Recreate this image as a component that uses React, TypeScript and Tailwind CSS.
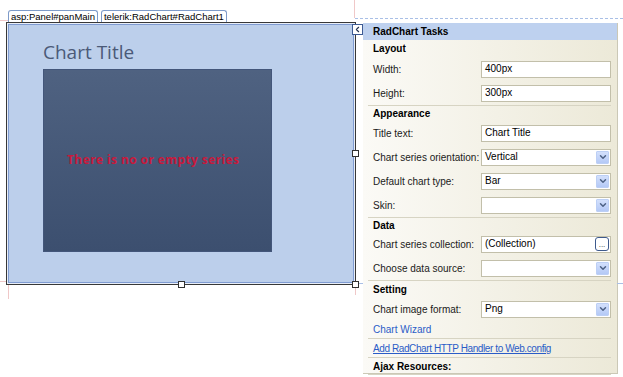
import { ChevronDown, ChevronLeft } from 'lucide-react';

// Designer surface with a RadChart control and its smart-tag task panel
const ui = { fontFamily: '"Liberation Sans", Arial, sans-serif' };

type Field = { label: string; value?: string; kind: 'text' | 'select' | 'dots' };

const sections: { title: string; head: string; fields: Field[] }[] = [
  {
    title: 'Layout',
    head: 'h-[17px]',
    fields: [
      { label: 'Width:', value: '400px', kind: 'text' },
      { label: 'Height:', value: '300px', kind: 'text' },
    ],
  },
  {
    title: 'Appearance',
    head: 'h-[15px]',
    fields: [
      { label: 'Title text:', value: 'Chart Title', kind: 'text' },
      { label: 'Chart series orientation:', value: 'Vertical', kind: 'select' },
      { label: 'Default chart type:', value: 'Bar', kind: 'select' },
      { label: 'Skin:', kind: 'select' },
    ],
  },
  {
    title: 'Data',
    head: 'h-[14px]',
    fields: [
      { label: 'Chart series collection:', value: '(Collection)', kind: 'dots' },
      { label: 'Choose data source:', kind: 'select' },
    ],
  },
];

function Handle({ className }: { className: string }) {
  return <div className={`absolute w-[7px] h-[7px] bg-white border border-[#303030] ${className}`} />;
}

function FieldRow({ field }: { field: Field }) {
  return (
    <div className="h-[24px] flex items-center">
      <div className="w-[108px] text-[10px] text-[#1a1a1a]">{field.label}</div>
      <div className="w-[130px] h-[17px] bg-white border border-[#c2bfaa] flex items-center pl-[3px] pr-[1px]">
        <span className="flex-1 text-[10px] text-black leading-none">{field.value}</span>
        {field.kind === 'select' && (
          <span className="w-[13px] h-[13px] bg-gradient-to-b from-[#d3e0fc] to-[#b4c9f6] border border-[#bccff5] flex items-center justify-center rounded-[1px]">
            <ChevronDown className="w-[10px] h-[10px] text-[#4d6185]" strokeWidth={3.5} />
          </span>
        )}
        {field.kind === 'dots' && (
          <span className="w-[14px] h-[14px] bg-white border border-[#3e5a8c] rounded-[3px] flex items-end justify-center text-[8px] leading-[8px] text-[#333] pb-[1px]">
            ...
          </span>
        )}
      </div>
    </div>
  );
}

export default function App() {
  return (
    <div className="relative w-[623px] h-[377px] bg-white overflow-hidden flex" style={ui}>
      {/* guide lines of the designer */}
      <div className="absolute left-[355px] right-0 top-[18px] border-t border-dashed border-[#a9bfe6]" />
      <div className="absolute left-0 w-[8px] top-[20px] border-t border-[#f0c8c8]" />
      <div className="absolute left-[354px] top-0 h-[18px] border-l border-[#f0c8c8]" />
      <div className="absolute left-0 w-[8px] top-[281px] border-t border-[#f0c8c8]" />
      <div className="absolute left-[8px] top-[285px] h-[14px] border-l border-[#f0c8c8]" />
      <div className="absolute left-[355px] top-[287px] h-[8px] border-l border-[#f0c8c8]" />
      <div className="absolute left-[357px] w-[6px] top-[283px] border-t border-dashed border-[#a9bfe6]" />
      <div className="absolute left-[617px] right-0 top-[283px] border-t border-dashed border-[#a9bfe6]" />

      {/* chart control */}
      <div className="pl-[6px] pt-[10px] w-[356px] shrink-0">
        <div className="flex gap-[3px] pl-[2px] h-[12px] relative z-10">
          <div className="bg-white border border-b-0 border-[#7e9bc9] rounded-t-[3px] px-[2px] text-[9.5px] leading-[11px] text-black">
            asp:Panel#panMain
          </div>
          <div className="bg-white border border-b-0 border-[#7e9bc9] rounded-t-[3px] px-[2px] text-[9.5px] leading-[11px] text-black">
            telerik:RadChart#RadChart1
          </div>
        </div>
        <div className="relative w-[350px] h-[263px] border border-[#383838] p-[1px] bg-[#e8eef8]">
          <div className="w-full h-full border border-[#7f9bd1] bg-[#bccfeb] pl-[34px] pt-[16px]">
            <div className="text-[19px] leading-[22px] text-[#4b5a78]" style={{ fontFamily: '"Open Sans", sans-serif' }}>
              Chart Title
            </div>
            <div className="mt-[6px] w-[229px] h-[183px] border border-[#43567a] bg-gradient-to-b from-[#4f6281] to-[#3c4f6f] flex items-center">
              <span
                className="pl-[23px] pb-[2px] text-[12px] tracking-[0.4px] font-bold text-[#c8193c]"
                style={{ fontFamily: '"Open Sans", sans-serif' }}
              >
                There is no or empty series
              </span>
            </div>
          </div>
          <Handle className="right-[-4px] top-[127px]" />
          <Handle className="left-[171px] bottom-[-4px]" />
          <Handle className="right-[-4px] bottom-[-4px]" />
        </div>
      </div>

      {/* smart tag panel */}
      <div className="pt-[23px] flex items-start">
        <div className="relative w-[11px] h-[11px] -ml-[4px] mt-[1px] bg-white border border-[#3c5a94] flex items-center justify-center z-10">
          <ChevronLeft className="w-[9px] h-[9px] text-[#22304f]" strokeWidth={3} />
        </div>
        <div className="w-[255px] h-[351px] border-r border-b border-[#cbc8b6] bg-gradient-to-r from-[#fbfaf6] to-[#ece9d8]">
          <div className="h-[17px] bg-[#bed1ef] flex items-center pl-[10px] text-[10px] font-bold text-black">
            RadChart Tasks
          </div>
          <div className="pl-[10px] pr-[6px]">
            {sections.map((s) => (
              <div key={s.title} className="border-b border-[#d7d4c3] -ml-[5px] pl-[5px]">
                <div className={`${s.head} flex items-center text-[10px] font-bold text-black`}>{s.title}</div>
                {s.fields.map((f) => (
                  <FieldRow key={f.label} field={f} />
                ))}
              </div>
            ))}
            <div className="border-b border-[#d7d4c3] -ml-[5px] pl-[5px]">
              <div className="h-[16px] flex items-center text-[10px] font-bold text-black">Setting</div>
              <FieldRow field={{ label: 'Chart image format:', value: 'Png', kind: 'select' }} />
              <div className="h-[17px] flex items-center text-[10px] text-[#2a5cc7]">Chart Wizard</div>
            </div>
            <div className="border-b border-[#d7d4c3] -ml-[5px] pl-[5px] h-[19px] flex items-center">
              <span className="text-[10px] tracking-[-0.4px] text-[#2a5cc7] underline">
                Add RadChart HTTP Handler to Web.config
              </span>
            </div>
            <div className="border-b border-[#d7d4c3] -ml-[5px] pl-[5px] h-[17px] flex items-center text-[10px] font-bold text-black">
              Ajax Resources:
            </div>
          </div>
        </div>
      </div>
    </div>
  );
}
